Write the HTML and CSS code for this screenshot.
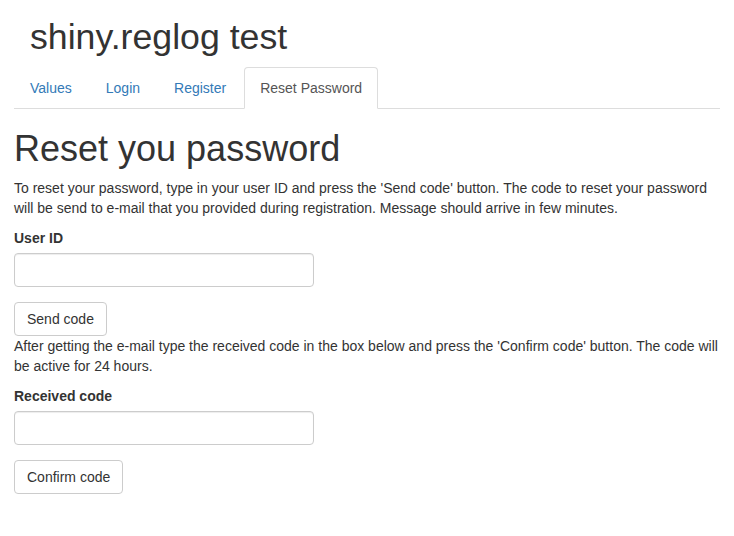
FILE: index.html
```html
<!DOCTYPE html>
<html>
<head>
<meta charset="utf-8">
<link rel="stylesheet" href="styles.css">
</head>
<body>
<div class="page">
  <h2 class="title">shiny.reglog test</h2>
  <ul class="tabs">
    <li><a class="tab">Values</a></li>
    <li><a class="tab">Login</a></li>
    <li><a class="tab">Register</a></li>
    <li><a class="tab active">Reset Password</a></li>
  </ul>
  <div class="content">
    <h1 class="heading">Reset you password</h1>
    <p class="text">To reset your password, type in your user ID and press the 'Send code' button. The code to reset your password will be send to e-mail that you provided during registration. Message should arrive in few minutes.</p>
    <div class="group">
      <label class="label">User ID</label>
      <input class="input" type="text">
    </div>
    <button class="btn">Send code</button>
    <p class="text">After getting the e-mail type the received code in the box below and press the 'Confirm code' button. The code will be active for 24 hours.</p>
    <div class="group">
      <label class="label">Received code</label>
      <input class="input" type="text">
    </div>
    <button class="btn">Confirm code</button>
  </div>
</div>
</body>
</html>
```
FILE: styles.css
```css
* { box-sizing: border-box; }
html, body {
  margin: 0;
  background: #fff;
  font-family: "Liberation Sans", Arial, sans-serif;
  font-size: 14px;
  line-height: 20px;
  color: #333;
}
.page {
  padding: 0 14px;
}
.title {
  margin: 17px 0 10px;
  padding-left: 16px;
  font-size: 35.7px;
  font-weight: 500;
  line-height: 40px;
}
.tabs {
  list-style: none;
  margin: 0;
  padding: 0;
  display: flex;
  border-bottom: 1px solid #ddd;
}
.tabs li {
  margin-bottom: -1px;
  margin-right: 2px;
}
.tab {
  display: block;
  padding: 10px 15px;
  line-height: 20px;
  border: 1px solid transparent;
  border-radius: 4px 4px 0 0;
  color: #337ab7;
}
.tab.active {
  color: #555;
  background: #fff;
  border-color: #ddd #ddd transparent;
}
.heading {
  margin: 20px 0 10px;
  font-size: 36px;
  font-weight: 500;
  line-height: 39px;
}
.text {
  margin: 0 0 10px;
}
.group {
  margin-bottom: 15px;
}
.label {
  display: inline-block;
  margin-bottom: 5px;
  font-weight: bold;
}
.input {
  display: block;
  width: 300px;
  height: 34px;
  padding: 6px 12px;
  font: inherit;
  color: #555;
  background: #fff;
  border: 1px solid #ccc;
  border-radius: 4px;
  box-shadow: inset 0 1px 1px rgba(0,0,0,.075);
}
.btn {
  display: inline-block;
  height: 34px;
  padding: 6px 12px;
  font: inherit;
  line-height: 20px;
  color: #333;
  background: #fff;
  border: 1px solid #ccc;
  border-radius: 4px;
  vertical-align: top;
}
```
